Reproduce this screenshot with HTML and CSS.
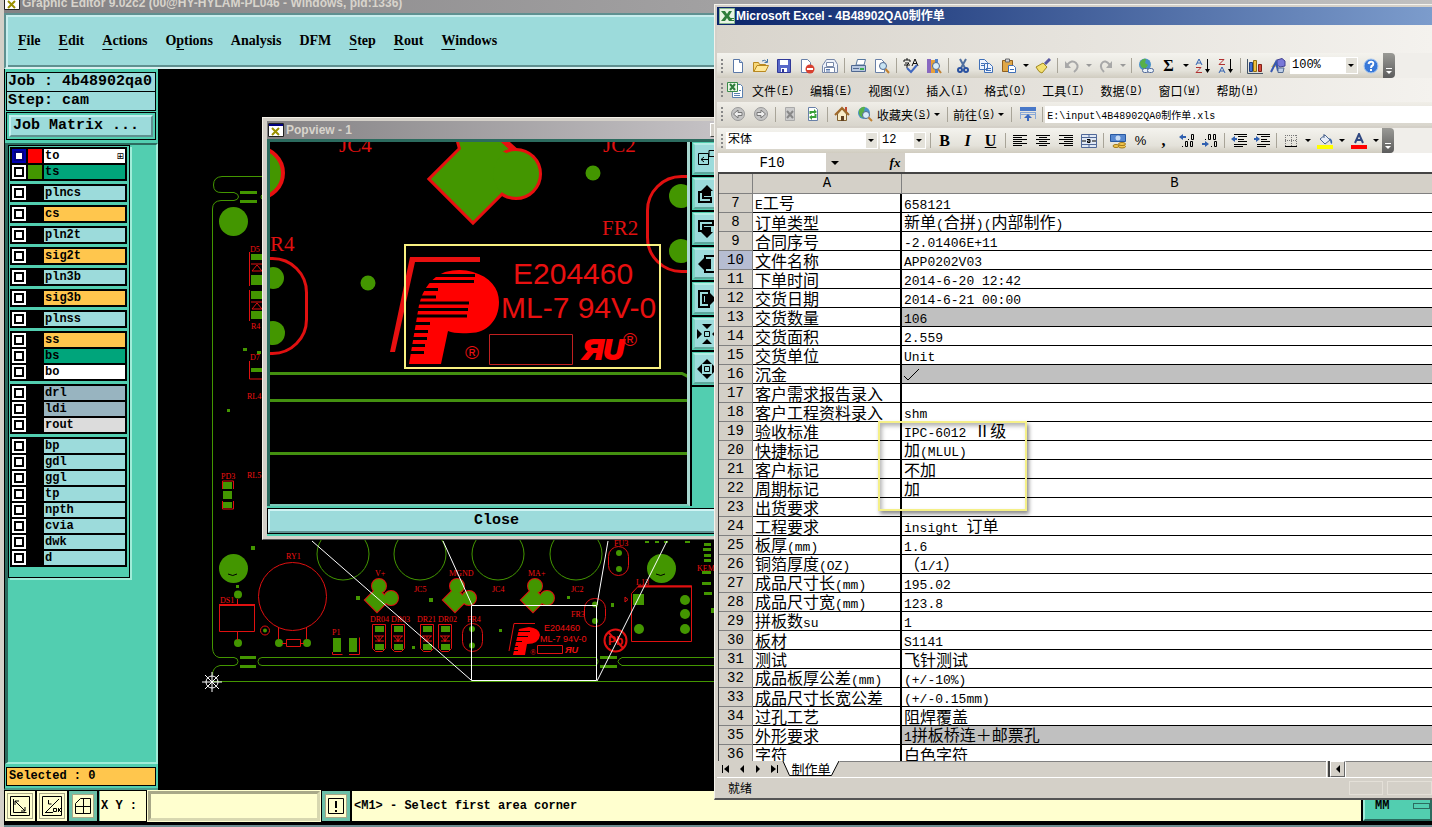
FILE: index.html
```html
<!DOCTYPE html>
<html lang="zh-CN">
<head>
<meta charset="utf-8">
<title>Graphic Editor</title>
<link rel="stylesheet" href="styles.css">
</head>
<body>
<div class="desktop">
<main class="editor">
  <header class="editor-title">
    <svg class="xicon" viewBox="0 0 16 14"><path fill="#fff" stroke="#222" d="M.5.5h15v13H.5z"/><path fill="#000080" d="M1 1h14v2H1z"/><path d="M4 5l7 7M11 5l-7 7" stroke="#9a9000" stroke-width="2"/></svg>
    <span>Graphic Editor 9.02c2 (00@HY-HYLAM-PL046 - Windows, pid:1336)</span>
  </header>
  <nav class="menubar">
    <button><u>F</u>ile</button><button><u>E</u>dit</button><button><u>A</u>ctions</button><button>O<u>p</u>tions</button><button>Analysis</button><button>DFM</button><button><u>S</u>tep</button><button><u>R</u>out</button><button><u>W</u>indows</button>
  </nav>
  <div class="work">
    <aside class="side">
      <div class="job">Job : 4b48902qa0</div>
      <div class="job step">Step: cam</div>
      <div class="matrix"><button>Job Matrix ...</button></div>
      <div class="panel">
        <div class="layers">
          <div class="group">
            <label class="layer on"><input type="checkbox"><i class="red"></i><span class="white">to<b>⊞</b></span></label>
            <label class="layer"><input type="checkbox"><i class="green"></i><span class="jade">ts</span></label>
          </div>
          <div class="group"><label class="layer"><input type="checkbox"><i></i><span>plncs</span></label></div>
          <div class="group"><label class="layer"><input type="checkbox"><i></i><span class="amber">cs</span></label></div>
          <div class="group"><label class="layer"><input type="checkbox"><i></i><span>pln2t</span></label></div>
          <div class="group"><label class="layer"><input type="checkbox"><i></i><span class="amber">sig2t</span></label></div>
          <div class="group"><label class="layer"><input type="checkbox"><i></i><span>pln3b</span></label></div>
          <div class="group"><label class="layer"><input type="checkbox"><i></i><span class="amber">sig3b</span></label></div>
          <div class="group"><label class="layer"><input type="checkbox"><i></i><span>plnss</span></label></div>
          <div class="group">
            <label class="layer"><input type="checkbox"><i></i><span class="amber">ss</span></label>
            <label class="layer"><input type="checkbox"><i></i><span class="jade">bs</span></label>
            <label class="layer"><input type="checkbox"><i></i><span class="white">bo</span></label>
          </div>
          <div class="group">
            <label class="layer"><input type="checkbox"><i></i><span class="slate">drl</span></label>
            <label class="layer"><input type="checkbox"><i></i><span class="slate">ldi</span></label>
            <label class="layer"><input type="checkbox"><i></i><span class="grey">rout</span></label>
          </div>
          <div class="group">
            <label class="layer"><input type="checkbox"><i></i><span>bp</span></label>
            <label class="layer"><input type="checkbox"><i></i><span>gdl</span></label>
            <label class="layer"><input type="checkbox"><i></i><span>ggl</span></label>
            <label class="layer"><input type="checkbox"><i></i><span>tp</span></label>
            <label class="layer"><input type="checkbox"><i></i><span>npth</span></label>
            <label class="layer"><input type="checkbox"><i></i><span>cvia</span></label>
            <label class="layer"><input type="checkbox"><i></i><span>dwk</span></label>
            <label class="layer"><input type="checkbox"><i></i><span>d</span></label>
          </div>
        </div>
      </div>
      <div class="selected">Selected : 0</div>
    </aside>
    <svg class="board">
      <defs>
        <g id="clover"><g stroke="#e01010" stroke-width="2"><path d="M0-12L12 0 0 12-12 0z"/><circle cx="2" cy="-14" r="7"/><circle cx="14" cy="-2" r="7"/></g><path d="M0-12L12 0 0 12-12 0z"/><circle cx="2" cy="-14" r="7"/><circle cx="14" cy="-2" r="7"/></g>
        <g id="diode"><path d="M.5.5h13v24l-3 3h-7l-3-3z" fill="none" stroke="#e01010"/><path fill="#439600" d="M3 2h9v6H3zM3 20h9v6H3z"/><path d="M2 12h10M7 12v6M3 12l4 5 4-5M3 17h9" fill="none" stroke="#e01010"/></g>
      </defs>
      <g transform="translate(-158 -69)">
        <g fill="none" stroke="#439600">
          <path d="M264 176.500H222Q213.500 177 213.500 185T222 192.500H234Q239 194 238.500 197T234 200.500H221Q212.500 201 212.500 209V648Q213 656 219 657.500H234Q238 658 238 661.500T234 665.500H220Q212.500 667 212.500 675"/>
          <path d="M264 193q-6 4 0 8M596 657.500H262q-4 0-4 4t4 4H596q4-4 0-8M714 657.500H622q-8 4 0 8H714M212 681.500H714"/>
          <circle cx="343" cy="554" r="26"/><circle cx="420" cy="554" r="26"/><circle cx="498" cy="554" r="26"/><circle cx="576" cy="554" r="26"/>
        </g>
        <g fill="#439600">
          <path d="M240 191h17v3h-17zM240 200h17v3h-17zM240 656h16v3h-16zM240 665h16v3h-16zM600 656h17v3h-17zM600 665h17v3h-17z"/>
          <circle cx="233.500" cy="221.500" r="14.500"/><circle cx="233.500" cy="568.500" r="14.500"/><circle cx="661.500" cy="568.500" r="14.500"/>
          <circle cx="238" cy="594.500" r="4"/><circle cx="238" cy="643" r="4"/><circle cx="279" cy="643" r="4"/><circle cx="307" cy="643" r="4"/><circle cx="265" cy="630.500" r="2"/>
          <circle cx="472" cy="629" r="3"/><circle cx="472" cy="645.500" r="3"/><circle cx="595" cy="604.500" r="3"/><circle cx="595" cy="621" r="3"/><circle cx="619" cy="553" r="3"/><circle cx="619" cy="569" r="3"/>
          <path d="M251 546h4v4h-4zM236 585h3v3h-3zM356 596h4v4h-4zM429 598h4v4h-4zM567 596h3v3h-3zM499 629h3v3h-3zM412 646h3v3h-3zM611 603h3v4h-3zM243 348h4v3h-4zM257 351h4v3h-4zM227 409h3v3h-3z"/>
          <path d="M333 638h8v14h-8zM349 638h8v14h-8zM223 482h9v7h-9zM223 491h9v8h-9zM223 502h9v6h-9z"/>
          <path d="M633 594h11v11h-11z"/><circle cx="685" cy="600" r="5"/><circle cx="685" cy="614" r="5"/><circle cx="685" cy="629" r="5"/><circle cx="639" cy="629" r="5"/>
          <path d="M704 543h7v3h-7zM703 548h8v3h-8zM704 554h7v3h-7zM704 559h7v3h-7zM702 571h9v3h-9zM702 582h9v3h-9zM704 592h8v3h-8zM711 608h3v5h-3zM645 541h4v2h-4zM655 541h4v2h-4zM664 541h4v2h-4zM685 541h5v2h-5z"/>
          <path d="M251 254h11v6h-11zM251 275h11v10h-11zM251 291h11v8h-11zM251 311h11v8h-11zM251 368h11v4h-11z"/>
          <use href="#clover" x="377" y="600"/><use href="#clover" x="455" y="600"/><use href="#clover" x="533" y="600"/>
        </g>
        <g fill="none" stroke="#e01010">
          <circle cx="292.500" cy="596.500" r="34"/><circle cx="265" cy="630.500" r="4.500"/>
          <path d="M219.500 605.500h35v26h-35zM237.500 599v6M237.500 632v8M278.500 627v12M306.500 627v12M286.500 639.500h14v7h-14zM282 643.500h4M301 643.500h3M332.500 652v2.500h10M349 654.500h10.500v-17"/>
          <path d="M219 605h36" stroke-width="2"/>
          <path d="M222.500 489v-8h11v8M222.500 501v8h11v-8M249.500 252v34M249.500 290v31M252 271l5-6 5 6zM252 309l5-6 5 6zM251 264h11M251 302h11M249.500 361v18h13"/>
          <rect x="462.500" y="623.500" width="20" height="28" rx="10"/><rect x="584.500" y="598.500" width="21" height="28" rx="10"/><rect x="608.500" y="546.500" width="20" height="29" rx="10"/>
          <path d="M691.500 586v55.500h-60v-48l7-7.500zM625 597v5l3-2.500z"/><path d="M638 586.500h54" stroke-width="2"/>
          <path d="M509 651l5-27.500h21M537.500 645.500h25v8h-25z"/>
          <circle cx="615.500" cy="640.500" r="11" stroke-width="2"/><path d="M608 632l15 16" stroke-width="2"/>
        </g>
        <use href="#diode" x="372" y="624"/><use href="#diode" x="391" y="624"/><use href="#diode" x="420" y="624"/><use href="#diode" x="438" y="624"/>
        <path fill="#f00" d="M519 629l10-2q10 1 11 8-1 9-13 9l-2 11h-12z"/><path stroke="#000" d="M515 631.500h15M514 636.500h14M514 641.500h8M512 646.500h6M512 650.500h6"/>
        <g class="silk">
          <text x="286" y="559">RY1</text><text x="220" y="603">DS1</text><text x="332" y="635">P1</text><text x="375" y="576">V+</text><text x="449" y="576">MGND</text><text x="528" y="576">MA+</text><text x="414" y="592">JC5</text><text x="492" y="592">JC4</text><text x="571" y="592">JC2</text><text x="370" y="622">DR04</text><text x="391" y="622">DR03</text><text x="417" y="622">DR21</text><text x="438" y="622">DR02</text><text x="467" y="622">FR4</text><text x="571" y="617">FR3</text><text x="614" y="546">FU3</text><text x="636" y="585">L13</text><text x="697" y="571">KEM</text><text x="250" y="252">D5</text><text x="251" y="329">R4</text><text x="247" y="399">RL4</text><text x="247" y="478">RL5</text><text x="221" y="479">PD3</text><text x="250" y="360">D7</text>
          <text x="530" y="655">®</text>
        </g>
        <text class="mini" x="544" y="631">E204460</text><text class="mini" x="540" y="642">ML-7 94V-0</text><text class="mini heavy" x="565" y="653">ЯU</text><text class="pb" x="608" y="645">Pb</text>
        <g fill="none" stroke="#fff"><path d="M312 541L471 680M443 541l29 64M608 541l-11 64M667 541L597 681M471.500 605.500h125v75h-125z"/><circle cx="212" cy="682" r="6"/><path d="M202 682h20M212 672v20M205 675l14 14M219 675l-14 14"/></g>
        <path d="M228 574q5 3 9 0M656 574q5 3 9 0" stroke="#000" fill="none"/>
      </g>
    </svg>
  </div>
  <footer class="prompt">
    <button class="pbtn" aria-label="Scale"><svg viewBox="0 0 20 20"><path d="M.5.500h19v19H.5zM3.500 3v13.500h13M5 5l10 10M5 9V5h4M15 11v4h-4" fill="none" stroke="#000"/></svg></button>
    <button class="pbtn" aria-label="Line mode"><svg viewBox="0 0 20 20"><path d="M.5.500h19v19H.5zM3 17L17 3M6.500 4v4h3M3 16.500h8M11.500 12.500v3h3v-3zM16.500 12v4M19 12l-2 2 2 2" fill="none" stroke="#000"/></svg></button>
    <button class="pbtn teal" aria-label="Grid"><svg viewBox="0 0 16 16"><path d="M.500 5.500l5-5h10v15H.5zM.5 8.500h15M8.500 .500v15" fill="none" stroke="#000"/></svg></button>
    <label class="xy" for="xy">X Y :</label>
    <input id="xy" class="xy-in" type="text">
    <button class="pbtn teal" aria-label="Alert"><svg viewBox="0 0 16 16"><path d="M.500.500h15v15H.5z" fill="none" stroke="#000"/><path d="M7 3h2v7H7zM7 12h2v2H7z"/></svg></button>
    <output class="msg">&lt;M1&gt; - Select first area corner</output>
    <button class="unit">MM<span></span></button>
  </footer>
</main>

<section class="pop">
  <header class="pop-title">
    <svg class="xicon" viewBox="0 0 16 14"><path fill="#fff" stroke="#222" d="M.5.5h15v13H.5z"/><path fill="#000080" d="M1 1h14v2H1z"/><path d="M4 5l7 7M11 5l-7 7" stroke="#9a9000" stroke-width="2"/></svg>
    <span>Popview - 1</span><button class="min" aria-label="Minimise"></button>
  </header>
  <div class="pop-body">
    <svg class="pop-view"><g transform="translate(-270 -142)">
      <g fill="#439600">
        <circle cx="258" cy="173" r="25" stroke="#e81010" stroke-width="4"/>
        <g stroke="#e81010" stroke-width="6"><path d="M456 130L461 149 431 179 473 221 530 164 492 130z"/><circle cx="516" cy="174" r="23"/></g>
        <path d="M456 130L461 149 431 179 473 221 530 164 500 150 496 130z"/><circle cx="516" cy="174" r="23"/>
        <circle cx="593" cy="173" r="7.500"/><circle cx="368" cy="283" r="7.500"/>
        <circle cx="273" cy="278" r="11"/><circle cx="273" cy="333" r="12"/><circle cx="681" cy="196" r="12"/><circle cx="681" cy="251" r="12"/>
      </g>
      <g fill="none" stroke="#e01010" stroke-width="3"><rect x="236" y="258.500" width="70.500" height="95" rx="34"/><rect x="647.500" y="176.500" width="72" height="95" rx="34"/></g>
      <path fill="none" stroke="#439010" stroke-width="3" d="M269 373.500H682l6 3M269 400.500H690M269 453.500H690"/>
      <g class="ref"><text x="339" y="152">JC4</text><text x="603" y="152">JC2</text><text x="270" y="251">R4</text><text x="602" y="235">FR2</text></g>
      <path fill="#e81010" d="M410 257h70v5h-65l-20 90h-5z"/>
      <path fill="#f00" d="M445 272Q460 268 473 272C490 277 499 288 499 302C499 320 487 333 470 333Q455 334 448 331L441 364H409L419 305Q425 280 445 272z"/>
      <path fill="none" stroke="#000" stroke-width="3" d="M434 275.500h41M428 281.500h46M421 289.500h17M419 297h17M416 303h53M415 309.500h53M414 316h53M413 323.500h17M411 331.500h17M409 338.500h18M407 345.500h18M407 352.500h17"/>
      <path fill="none" stroke="#c02020" d="M489.500 334.500h83v30h-83z"/>
      <g class="mark"><text x="513" y="284">E204460</text><text x="501" y="318">ML-7 94V-0</text></g>
      <text class="ur" x="583" y="359">ЯU</text><text class="reg" x="465" y="359">®</text><text class="reg" x="623" y="346">®</text>
      <path fill="none" stroke="#f8f080" stroke-width="2" d="M405 245h255v123H405z"/>
    </g></svg>
    <div class="pop-tools">
      <button aria-label="Overview"><svg viewBox="0 0 20 20"><path d="M1.500 4.500h10v11h-10zM12 1.500h7v6h-7zM4 10.500h8M7 8l-3 2.500L7 13" fill="none" stroke="#000"/></svg></button>
      <button aria-label="Up"><svg viewBox="0 0 20 20"><path d="M2 8v10h12v-4H6V8z" fill="none" stroke="#000" stroke-width="2"/><path d="M10 1l6 6h-2v5H6V7H4z"/></svg></button>
      <button aria-label="Down"><svg viewBox="0 0 20 20"><path d="M2 2h14v4H6v6H2z" fill="none" stroke="#000" stroke-width="2"/><path d="M10 19l6-6h-2V8H6v5H4z"/></svg></button>
      <button aria-label="Left"><svg viewBox="0 0 20 20"><path d="M8 2h10v16H8v-4h5V6H8z" fill="none" stroke="#000" stroke-width="2"/><path d="M1 10l6-6v3h5v6H7v3z"/></svg></button>
      <button aria-label="Right"><svg viewBox="0 0 20 20"><path d="M2 2h10v4H6v8h6v4H2z" fill="none" stroke="#000" stroke-width="2"/><path d="M19 10l-6-6v3H8v6h5v3z"/></svg></button>
      <button aria-label="Zoom in"><svg viewBox="0 0 20 20"><path d="M7.500 7.500h5v5h-5z" fill="none" stroke="#000"/><path d="M5 0h10l-5 5zM5 20h10l-5-5zM0 5v10l5-5zM20 5v10l-5-5z"/></svg></button>
      <button aria-label="Zoom out"><svg viewBox="0 0 20 20"><path d="M7.500 7.500h5v5h-5z" fill="none" stroke="#000"/><path d="M5 5h10l-5-5zM5 15h10l-5 5zM5 5v10l-5-5zM15 5v10l5-5z"/></svg></button>
    </div>
  </div>
  <div class="pop-foot"><button>Close</button></div>
</section>

<section class="excel">
  <header class="xl-title">
    <svg viewBox="0 0 16 16"><path fill="#e8f4e4" stroke="#8ab890" d="M.5.5h15v15H.5z"/><path fill="#2f7d3c" d="M2 3h4l2 3 2-3h3L10 8l4 5h-4l-2-3-2 3H2l4-5z"/><path stroke="#2f7d3c" d="M10 10.500h5M11 12.500h4"/></svg>
    <span>Microsoft Excel - 4B48902QA0制作单</span>
  </header>
  <div class="xl-gap"></div>
  <div class="bar">
    <span class="grip"></span>
    <button aria-label="新建"><svg viewBox="0 0 16 16"><path fill="#fff" stroke="#5a78a8" d="M3.500 1.500h6l3 3v10h-9z"/><path fill="#c8d8f0" stroke="#5a78a8" d="M9.500 1.500v3h3"/></svg></button>
    <button aria-label="打开"><svg viewBox="0 0 16 16"><path fill="#f8d878" stroke="#b88820" d="M.5 13.500v-9h5l1 2h6v7z"/><path fill="#ffe898" stroke="#b88820" d="M1 13.500l3-6h11.500l-3 6z"/><path fill="none" stroke="#4878a8" d="M9 3q3-2 5 1M14.500 1v3.500h-3"/></svg></button>
    <button aria-label="保存"><svg viewBox="0 0 16 16"><path fill="#5868c8" stroke="#303898" d="M1.500 1.500h13v13h-13z"/><path fill="#fff" d="M4 2h8v5H4zM5 10h6v4H5z"/><path fill="#303898" d="M6 11h2v3H6z"/></svg></button>
    <button aria-label="权限"><svg viewBox="0 0 16 16"><path fill="#fff" stroke="#6880a8" d="M2.500 1.500h6l3 3v10h-9z"/><circle cx="11" cy="11" r="4.500" fill="#d84030"/><path fill="#fff" d="M8 10h6v2H8z"/></svg></button>
    <button aria-label="邮件"><svg viewBox="0 0 16 16"><path fill="#eef2fa" stroke="#7888a8" d="M.500 7.500l4-6h8l3 5v8H.5z"/><path fill="#fff" stroke="#7888a8" d="M4.500 4.500h7v4h-7zM2.500 9.500h10v5h-10z"/><path stroke="#5878b0" d="M4 11.500h4M4 13h4"/></svg></button>
    <span class="sep"></span>
    <button aria-label="打印"><svg viewBox="0 0 16 16"><path fill="#fff" stroke="#5878a0" d="M5 7l1.500-5.500h8L13 7z"/><path fill="#b8c8e0" stroke="#506890" d="M.5 7.500h14v6H.5z"/><path fill="#38b050" d="M9 10h4v2H9z"/><path stroke="#506890" d="M2 10.500h6"/></svg></button>
    <button aria-label="打印预览"><svg viewBox="0 0 16 16"><path fill="#fff" stroke="#6880a8" d="M1.500 1.500h6l3 3v10h-9z"/><circle cx="9" cy="8" r="3.500" fill="#c8e4f4" stroke="#506890"/><path stroke="#c08030" stroke-width="2" d="M11.500 11l3.500 4"/></svg></button>
    <span class="sep"></span>
    <button aria-label="拼写"><svg viewBox="0 0 16 16"><path d="M1 4V2h6v2M4 0v2M2 5h4L4 7v3M1 7h6M9 8l3-7 3 7M10 5.500h4" fill="none" stroke="#111"/><path d="M4 10l4 4 6-7" fill="none" stroke="#4068c0" stroke-width="2"/></svg></button>
    <button aria-label="信息检索"><svg viewBox="0 0 16 16"><path fill="#8868c0" d="M1 1h4v14H1z"/><path fill="#e8a038" d="M5 2h4v13H5z"/><path fill="#5080c8" d="M9 1h3v14H9z"/><circle cx="10" cy="8" r="3.500" fill="#d8ecf8" stroke="#506890"/><path stroke="#c08030" stroke-width="2" d="M12 11l3 4"/></svg></button>
    <span class="sep"></span>
    <button aria-label="剪切"><svg viewBox="0 0 16 16"><path d="M5 1l5 9M11 1L6 10" stroke="#5070a0" stroke-width="2"/><g fill="none" stroke="#2850a0" stroke-width="2"><circle cx="5" cy="12" r="2"/><circle cx="11" cy="12" r="2"/></g></svg></button>
    <button aria-label="复制"><svg viewBox="0 0 16 16"><path fill="#eef4ff" stroke="#4070b8" d="M1.500 1.500h5l3 3v7h-8zM6.500 5.500h5l3 3v6h-8z"/><path stroke="#4070b8" d="M3 5.500h3M3 7.500h3M8 10.500h5M8 12.500h5"/></svg></button>
    <button aria-label="粘贴"><svg viewBox="0 0 16 16"><path fill="#e0a848" stroke="#906020" d="M1.500 2.500h10v11h-10z"/><path fill="#d0d4dc" stroke="#666" d="M4.500 1h4v3h-4z"/><path fill="#fff" stroke="#4070b8" d="M7.500 7.500h5l2 2v5h-7z"/><path stroke="#4070b8" d="M9 11.500h4"/></svg></button>
    <span class="caret"></span>
    <button aria-label="格式刷"><svg viewBox="0 0 16 16"><path stroke="#5858a0" stroke-width="3" d="M10 6l5-5"/><path fill="#f4e070" stroke="#a08820" d="M1 9l7-4 4 4-5 6q-3 0-6-6z"/></svg></button>
    <span class="sep"></span>
    <button aria-label="撤消"><svg viewBox="0 0 16 16"><path fill="none" stroke="#a8a8a8" stroke-width="2" d="M3 7q5-6 9-2t-2 9"/><path fill="#a8a8a8" d="M1 3v7h6z"/></svg></button>
    <span class="caret dim"></span>
    <button aria-label="恢复"><svg viewBox="0 0 16 16"><path fill="none" stroke="#a8a8a8" stroke-width="2" d="M12 7Q7 1 4 5t2 9"/><path fill="#a8a8a8" d="M14 3v7H8z"/></svg></button>
    <span class="caret dim"></span>
    <span class="sep"></span>
    <button aria-label="超链接"><svg viewBox="0 0 16 16"><circle cx="7" cy="6.500" r="6" fill="#4890c8"/><path fill="#58b048" d="M2 4q3-4 6-3L7 5l3 2-3 4q-5-1-5-7z"/><g fill="#e8f0f8" stroke="#506898"><rect x="4.500" y="10.500" width="6" height="4" rx="2"/><rect x="9.500" y="10.500" width="6" height="4" rx="2"/></g></svg></button>
    <button class="sigma" aria-label="自动求和">Σ</button>
    <span class="caret"></span>
    <button aria-label="升序"><svg viewBox="0 0 16 16"><path fill="none" stroke="#3060b0" d="M1 7l3-6 3 6M2 5h4"/><path fill="none" stroke="#b03030" d="M1 9.500h5L1 14.500h6"/><path stroke="#000" d="M12.500 1v13"/><path d="M10 11h5l-2.500 4z"/></svg></button>
    <button aria-label="降序"><svg viewBox="0 0 16 16"><path fill="none" stroke="#b03030" d="M1 1.500h5L1 6.500h6"/><path fill="none" stroke="#3060b0" d="M1 15l3-6 3 6M2 13h4"/><path stroke="#000" d="M12.500 1v13"/><path d="M10 11h5l-2.500 4z"/></svg></button>
    <span class="sep"></span>
    <button aria-label="图表"><svg viewBox="0 0 16 16"><path fill="none" stroke="#456" d="M.5 1v14.500H16"/><path fill="#4070d0" stroke="#204080" d="M2.500 4.500h3v9h-3z"/><path fill="#f0c040" stroke="#907010" d="M6.500 2.500h3v11h-3z"/><path fill="#d84838" stroke="#802018" d="M11.500 6.500h3v7h-3z"/></svg></button>
    <button aria-label="绘图"><svg viewBox="0 0 16 16"><path fill="#7878d8" stroke="#404090" d="M7 2l5-1.500L15 3v5l-5 1-3-2z"/><path fill="#d8c068" d="M1 9l4-5 3 5z"/><path fill="none" stroke="#3858b0" stroke-width="2" d="M1 14l5-10 2 9"/><path fill="#c0d0e8" stroke="#506890" d="M8 10h6l-1 4.500H8z"/></svg></button>
    <span class="pick zoom"><select aria-label="显示比例"><option>100%</option></select></span>
    <button aria-label="帮助"><svg viewBox="0 0 16 16"><circle cx="8" cy="8" r="7" fill="#3878d8" stroke="#a8c8f0"/><path fill="none" stroke="#fff" stroke-width="2" d="M5.500 6q.5-2.500 3-2.300T10 7Q8 8 8 10M8 11v2"/></svg></button>
    <span class="cap"></span>
  </div>
  <nav class="xl-menu">
    <span class="grip"></span>
    <svg viewBox="0 0 16 16"><path fill="#fff" stroke="#5a80b0" d="M5.500 2.500h8l2 2v11h-10z"/><path fill="#e8f4e4" stroke="#3a8a48" d="M.5.500h10v9H.5z"/><path stroke="#2f7d3c" stroke-width="2" d="M3 2l5 6M8 2L3 8"/><path stroke="#5a80b0" d="M7 11.500h6M7 13.500h6M12 8.500h2"/></svg>
    <button>文件<span class="s">(<u>F</u>)</span></button><button>编辑<span class="s">(<u>E</u>)</span></button><button>视图<span class="s">(<u>V</u>)</span></button><button>插入<span class="s">(<u>I</u>)</span></button><button>格式<span class="s">(<u>O</u>)</span></button><button>工具<span class="s">(<u>T</u>)</span></button><button>数据<span class="s">(<u>D</u>)</span></button><button>窗口<span class="s">(<u>W</u>)</span></button><button>帮助<span class="s">(<u>H</u>)</span></button>
  </nav>
  <div class="bar web">
    <span class="grip"></span>
    <button aria-label="后退"><svg viewBox="0 0 16 16"><circle cx="8" cy="8" r="6.500" fill="#c4c4c4" stroke="#999"/><path fill="#eee" stroke="#777" d="M3.500 8L8 4v2.500h4v3H8V12z"/></svg></button>
    <button aria-label="前进"><svg viewBox="0 0 16 16"><circle cx="8" cy="8" r="6.500" fill="#c4c4c4" stroke="#999"/><path fill="#eee" stroke="#777" d="M12.500 8L8 4v2.500H4v3h4V12z"/></svg></button>
    <span class="sep"></span>
    <button aria-label="停止"><svg viewBox="0 0 16 16"><path fill="#ccc" stroke="#aaa" d="M3.500 1.500h9v13h-9z"/><path stroke="#888" stroke-width="2" d="M5 5l6 7M11 5l-6 7"/></svg></button>
    <button aria-label="刷新"><svg viewBox="0 0 16 16"><path fill="#fff" stroke="#6880a8" d="M3.500 1.500h7l2 2v11h-9z"/><path fill="none" stroke="#38a038" stroke-width="2" d="M5.500 8V6h4M10.500 8v3h-4"/><path fill="#38a038" d="M9 3l3 3-3 2zM7 9l-3 2 3 3z"/></svg></button>
    <span class="sep"></span>
    <button aria-label="主页"><svg viewBox="0 0 16 16"><path fill="#c04830" d="M11 1h2v5h-2z"/><path fill="#f8ecc8" stroke="#806030" d="M3.500 8v6.500h9V8L8 3z"/><path fill="none" stroke="#a06828" stroke-width="2" d="M1 9l7-7 7 7"/><path fill="#604020" d="M7 10h3v5H7z"/></svg></button>
    <button aria-label="搜索网页"><svg viewBox="0 0 16 16"><circle cx="7" cy="7" r="6" fill="#4890c8"/><path fill="#58b048" d="M2 4q3-4 6-3L7 5l2 2-3 5Q1 10 2 4z"/><circle cx="9" cy="9" r="3.500" fill="#d8ecf8" stroke="#506890"/><path stroke="#c08030" stroke-width="2" d="M11.500 11.500L15 15"/></svg></button>
    <button class="word">收藏夹<span class="s">(<u>S</u>)</span></button><span class="caret"></span>
    <span class="sep"></span>
    <button class="word">前往<span class="s">(<u>G</u>)</span></button><span class="caret"></span>
    <span class="sep"></span>
    <button aria-label="只显示 Web 工具栏"><svg viewBox="0 0 16 16"><path fill="#4878c8" d="M0 1h16v4H0z"/><path fill="none" stroke="#88a8d8" d="M0 6.500h16M.5 6v7M15.500 6v7M0 8.500h16"/><path fill="#3868c0" d="M8 8l4 4H9v3H7v-3H4z"/></svg></button>
    <span class="sep"></span>
    <input class="addr" type="text" aria-label="地址" value="E:\input\4B48902QA0制作单.xls">
  </div>
  <div class="bar">
    <span class="grip"></span>
    <span class="pick font"><select aria-label="字体"><option>宋体</option></select></span>
    <span class="pick size"><select aria-label="字号"><option>12</option></select></span>
    <span class="sep"></span>
    <button class="fmt">B</button><button class="fmt it">I</button><button class="fmt"><u>U</u></button>
    <span class="sep"></span>
    <button aria-label="左对齐"><svg viewBox="0 0 16 16"><path stroke="#000" d="M1 2.500h14M1 4.500h9M1 6.500h14M1 8.500h9M1 10.500h14M1 12.500h9"/></svg></button>
    <button aria-label="居中"><svg viewBox="0 0 16 16"><path stroke="#000" d="M1 2.500h14M4 4.500h8M1 6.500h14M4 8.500h8M1 10.500h14M4 12.500h8"/></svg></button>
    <button aria-label="右对齐"><svg viewBox="0 0 16 16"><path stroke="#000" d="M1 2.500h14M6 4.500h9M1 6.500h14M6 8.500h9M1 10.500h14M6 12.500h9"/></svg></button>
    <button aria-label="合并及居中"><svg viewBox="0 0 16 16"><path fill="#e0e8f4" stroke="#506898" d="M.5 1.500h15v13H.5zM.5 4.500h15M.5 11.500h15M8 2v2M8 12v2"/><path fill="none" stroke="#000" d="M1 8h4M11 8h4M6 6.500h3v3H6.500V8H9"/></svg></button>
    <span class="sep"></span>
    <button aria-label="货币样式"><svg viewBox="0 0 16 16"><path fill="#5888d0" stroke="#2858a0" d="M.5 1.500h15v7H.5z"/><circle cx="8" cy="5" r="2.500" fill="#c8dcf4"/><g fill="#f4c850" stroke="#a07818"><ellipse cx="12" cy="13.500" rx="3.500" ry="1.500"/><ellipse cx="12" cy="11" rx="3.500" ry="1.500"/><ellipse cx="6" cy="13" rx="3" ry="1.500"/></g></svg></button>
    <button class="pct">%</button><button class="fmt">,</button>
    <button class="dec" aria-label="增加小数位数"><svg viewBox="0 0 16 16"><path fill="#3060b0" d="M0 4l4-3v2h3v2H4v2z"/><path d="M9 6h1v1H9zM3 13h1v1H3z"/><path fill="none" stroke="#000" d="M12.500 1.500h2v5h-2zM6.500 8.500h2v5h-2zM11.500 8.500h2v5h-2z"/></svg></button>
    <button class="dec" aria-label="减少小数位数"><svg viewBox="0 0 16 16"><path fill="#3060b0" d="M7 11l-4-3v2H0v2h3v2z"/><path d="M3 6h1v1H3zM9 13h1v1H9z"/><path fill="none" stroke="#000" d="M6.500 1.500h2v5h-2zM11.500 1.500h2v5h-2zM12.500 8.500h2v5h-2z"/></svg></button>
    <span class="sep"></span>
    <button aria-label="减少缩进"><svg viewBox="0 0 16 16"><path stroke="#000" d="M3 1.500h13M7 3.500h9M7 6.500h6M7 8.500h9M3 11.500h13M3 13.500h9"/><path fill="#3060b0" d="M0 6l4-3v2h2v2H4v2z"/></svg></button>
    <button aria-label="增加缩进"><svg viewBox="0 0 16 16"><path stroke="#000" d="M3 1.500h13M7 3.500h9M7 6.500h6M7 8.500h9M3 11.500h13M3 13.500h9"/><path fill="#3060b0" d="M6 6L2 3v2H0v2h2v2z"/></svg></button>
    <span class="sep"></span>
    <button aria-label="边框"><svg viewBox="0 0 16 16"><path fill="none" stroke="#777" stroke-dasharray="1 1" d="M2 2.500h12M2 7.500h12M2.500 2v11M8.500 2v11M13.500 2v11"/><path stroke="#000" d="M2 13.500h12"/></svg></button><span class="caret"></span>
    <button aria-label="填充颜色"><svg viewBox="0 0 16 16"><path fill="#e8eef8" stroke="#506890" d="M3 6l5-4 5 5-5 4z"/><path fill="none" stroke="#506890" d="M7 5V1"/><path fill="#3868b0" d="M12 5q4 1 3 6-2-1-2-4z"/><path fill="#ff0" d="M0 12h16v4H0z"/></svg></button><span class="caret"></span>
    <button aria-label="字体颜色"><svg viewBox="0 0 16 16"><path fill="none" stroke="#304880" stroke-width="2" d="M4 10l4-9 4 9M5 7h6"/><path fill="#f00" d="M0 12h16v4H0z"/></svg></button><span class="caret"></span>
    <span class="cap"></span>
  </div>
  <div class="formula">
    <input class="name" type="text" aria-label="名称框" value="F10"><button class="name-btn" aria-label="名称列表"></button><button class="fx" aria-label="插入函数"><i>fx</i></button><input class="fval" type="text" aria-label="编辑栏">
  </div>
  <div class="sheet">
    <table>
      <colgroup><col class="c0"><col class="c1"><col></colgroup>
      <thead><tr><th></th><th>A</th><th>B</th></tr></thead>
      <tbody>
        <tr><th>7</th><td><span class="n">E</span>工号</td><td><span class="n">658121</span></td></tr>
        <tr><th>8</th><td>订单类型</td><td>新单<span class="n">(</span>合拼<span class="n">)(</span>内部制作<span class="n">)</span></td></tr>
        <tr><th>9</th><td>合同序号</td><td><span class="n">-2.01406E+11</span></td></tr>
        <tr><th class="cur">10</th><td>文件名称</td><td><span class="n">APP0202V03</span></td></tr>
        <tr><th>11</th><td>下单时间</td><td><span class="n">2014-6-20 12:42</span></td></tr>
        <tr><th>12</th><td>交货日期</td><td><span class="n">2014-6-21 00:00</span></td></tr>
        <tr class="sh"><th>13</th><td>交货数量</td><td><span class="n">106</span></td></tr>
        <tr><th>14</th><td>交货面积</td><td><span class="n">2.559</span></td></tr>
        <tr><th>15</th><td>交货单位</td><td><span class="n">Unit</span></td></tr>
        <tr class="sh"><th>16</th><td>沉金</td><td><svg class="tick" viewBox="0 0 16 14"><path d="M0 9l4 4L15 2" fill="none" stroke="#000"/></svg></td></tr>
        <tr><th>17</th><td>客户需求报告录入</td><td></td></tr>
        <tr><th>18</th><td>客户工程资料录入</td><td><span class="n">shm</span></td></tr>
        <tr><th>19</th><td>验收标准</td><td><span class="n">IPC-6012 </span>Ⅱ级</td></tr>
        <tr><th>20</th><td>快捷标记</td><td>加<span class="n">(MLUL)</span></td></tr>
        <tr><th>21</th><td>客户标记</td><td>不加</td></tr>
        <tr><th>22</th><td>周期标记</td><td>加</td></tr>
        <tr><th>23</th><td>出货要求</td><td></td></tr>
        <tr><th>24</th><td>工程要求</td><td><span class="n">insight </span>订单</td></tr>
        <tr><th>25</th><td>板厚<span class="n">(mm)</span></td><td><span class="n">1.6</span></td></tr>
        <tr><th>26</th><td>铜箔厚度<span class="n">(OZ)</span></td><td>（<span class="n">1/1</span>）</td></tr>
        <tr><th>27</th><td>成品尺寸长<span class="n">(mm)</span></td><td><span class="n">195.02</span></td></tr>
        <tr><th>28</th><td>成品尺寸宽<span class="n">(mm)</span></td><td><span class="n">123.8</span></td></tr>
        <tr><th>29</th><td>拼板数<span class="n">su</span></td><td><span class="n">1</span></td></tr>
        <tr><th>30</th><td>板材</td><td><span class="n">S1141</span></td></tr>
        <tr><th>31</th><td>测试</td><td>飞针测试</td></tr>
        <tr><th>32</th><td>成品板厚公差<span class="n">(mm)</span></td><td><span class="n">(+/-10%)</span></td></tr>
        <tr><th>33</th><td>成品尺寸长宽公差</td><td><span class="n">(+/-0.15mm)</span></td></tr>
        <tr><th>34</th><td>过孔工艺</td><td>阻焊覆盖</td></tr>
        <tr class="sh"><th>35</th><td>外形要求</td><td><span class="n">1</span>拼板桥连＋邮票孔</td></tr>
        <tr><th>36</th><td>字符</td><td>白色字符</td></tr>
      </tbody>
    </table>
  </div>
  <div class="tabs">
    <button aria-label="首张"><svg viewBox="0 0 8 8"><path d="M0 0h1v8H0zM7 0v8L2 4z"/></svg></button><button aria-label="上一张"><svg viewBox="0 0 8 8"><path d="M6 0v8L2 4z"/></svg></button><button aria-label="下一张"><svg viewBox="0 0 8 8"><path d="M2 0v8l4-4z"/></svg></button><button aria-label="末张"><svg viewBox="0 0 8 8"><path d="M7 0h1v8H7zM1 0v8l5-4z"/></svg></button>
    <button class="tab"><svg viewBox="0 0 58 16"><path fill="#fff" stroke="#000" d="M.5-1l7 15.500h42L57.500-1"/></svg><span>制作单</span></button>
    <span class="fill"></span>
    <span class="split"></span><button class="scroll" aria-label="向左滚动"><svg viewBox="0 0 8 8"><path d="M6 0v8L2 4z"/></svg></button><span class="track"></span>
  </div>
  <footer class="ready"><span>就绪</span><i></i><i></i></footer>
  <div class="note"></div>
</section>
</div>
</body>
</html>
```
FILE: styles.css
```css
* { box-sizing: border-box; }
body { margin: 0; }
button, input, select { font: inherit; color: inherit; margin: 0; padding: 0; border: 0; border-radius: 0; background: none; }
svg { display: block; }
i { font-style: normal; }
.desktop { position: relative; height: 100vh; overflow: hidden; background: #000; color: #000; font-family: "Liberation Mono", "Noto Sans CJK SC", monospace; }

/* editor window */
.editor { height: 100%; display: flex; flex-direction: column; border-left: 4px solid #d4d0c8; }
.editor-title { height: 20px; margin-top: -7px; flex: none; display: flex; align-items: center; gap: 2px; background: linear-gradient(90deg, #848284, #c0c0c0); color: #d8d4cc; font: bold 12px "Liberation Sans", sans-serif; white-space: nowrap; }
.xicon { width: 16px; height: 14px; flex: none; }
.menubar { height: 56px; flex: none; display: flex; align-items: center; gap: 18px; padding: 0 12px; background: #9cdbdb; border: 2px solid #5f9090; border-right: 0; border-bottom-color: #d8f0f0; box-shadow: inset 2px 2px #c8eeee, inset 0 -2px #5f9090; font: bold 14px "Liberation Serif", serif; }
.menubar u { text-underline-offset: 4px; }
.work { flex: 1; min-height: 0; display: flex; }
.side { width: 154px; flex: none; display: flex; flex-direction: column; padding-top: 3px; background: #52ceb0; border-left: 1px solid #000; border-bottom: 2px solid #4a9c8c; }
.job { height: 20px; margin: 0 2px 0 1px; padding-left: 1px; border: 1px solid #000; background: #9cdbdb; font: bold 15px/18px "Liberation Mono", monospace; white-space: nowrap; }
.job + .job { height: 19px; border-top: 0; }
.matrix { margin: 1px 2px 0 1px; height: 28px; padding: 2px; border: 1px solid #000; display: flex; }
.matrix button { flex: 1; text-align: left; padding-left: 2px; border: 2px solid; border-color: #c4f0f0 #5f9090 #5f9090 #c4f0f0; background: #9cdbdb; font: bold 15px/18px "Liberation Mono", monospace; }
.panel { flex: 1; margin-top: 3px; border: solid #2c6b5f; border-width: 2px 2px 2px 3px; border-right-color: #a0ecd8; border-bottom-color: #a0ecd8; }
.layers { width: 122px; padding: 1px 2px 10px 1px; border: 1px solid #000; box-shadow: 2px 2px #a0ecd8; display: flex; flex-direction: column; gap: 3px; }
.group { display: flex; flex-direction: column; gap: 2px; padding: 2px; background: #000; }
.layer { display: flex; gap: 2px; height: 14px; font: bold 12px/14px "Liberation Mono", monospace; }
.layer input { appearance: none; width: 14px; height: 14px; border: 2px solid #fff; background: #fff; box-shadow: inset 0 0 0 2px #000; flex: none; }
.layer.on input { border-color: #0000b0; box-shadow: inset 0 0 0 2px #000080; }
.layer i { width: 14px; flex: none; background: #000; }
.layer span { flex: 1; display: flex; justify-content: space-between; padding: 0 1px; background: #9cdbdb; }
.layer b { font: 9px/14px "DejaVu Sans", sans-serif; }
.layer .red { background: #f00; }
.layer .green { background: #439600; }
.layer .white { background: #fff; }
.layer .jade { background: #00a57b; }
.layer .amber { background: #ffc64d; }
.layer .slate { background: #98b4c0; }
.layer .grey { background: #dcdcdc; }
.selected { height: 19px; margin: 3px 2px 2px 1px; padding-left: 2px; border: 1px solid #000; background: #ffc64d; font: bold 12px/17px "Liberation Mono", monospace; }
.board { flex: 1; min-width: 0; height: 100%; background: #000; }
.silk text { font: 8px "Liberation Serif", serif; fill: #f01010; }
.mini { font: 9px "Liberation Sans", sans-serif; fill: #f01010; }
.heavy { font-weight: bold; font-style: italic; }
.pb { font: bold 12px "Liberation Sans", sans-serif; fill: #e01010; }
.prompt { height: 37px; flex: none; display: flex; gap: 2px; align-items: stretch; padding: 1px 0 4px 1px; background: #000; border-bottom: 2px solid #6c8c90; font: bold 12px "Liberation Mono", monospace; }
.pbtn { width: 30px; flex: none; display: grid; place-items: center; background: #ffffcf; border: 2px solid #ffffcf; box-shadow: inset 0 0 0 1px #a8a888; }
.pbtn svg { width: 20px; height: 20px; }
.pbtn.teal { border: 3px solid #6cc0a8; width: 28px; }
.pbtn.teal svg { width: 16px; height: 16px; }
.xy { width: 47px; display: flex; align-items: center; padding-left: 1px; background: #ffffcf; border-left: 1px solid #6cc0a8; }
.xy-in { width: 172px; padding: 0 8px; border: 3px solid; border-color: #a8a888 #d8d8b0 #d8d8b0 #a8a888; outline: 1px solid #ffffcf; background: #ffffcf; }
.msg { flex: 1; display: flex; align-items: center; padding-left: 2px; background: #ffffcf; }
.unit { width: 69px; display: flex; align-items: center; gap: 24px; padding-left: 10px; background: #52ceb0; border: 2px solid #2c6b5f; border-left-color: #a0ecd8; }
.unit span { width: 20px; height: 6px; border: 1px solid #2c6b5f; }

/* popview window */
.pop { position: absolute; left: 262px; top: 117px; width: 469px; height: 423px; display: flex; flex-direction: column; padding: 3px 4px; background: #d4d0c8; border: 1px solid #f4f0e8; border-right-color: #555; border-bottom-color: #555; }
.pop-title { height: 18px; flex: none; display: flex; align-items: center; gap: 2px; padding-left: 1px; background: linear-gradient(90deg, #848284, #c6c3c6); color: #d8d4cc; font: bold 12px "Liberation Sans", sans-serif; }
.min { margin: 0 0 0 auto; width: 16px; height: 14px; border: 1px solid; border-color: #fff #444 #444 #fff; background: #d4d0c8; }
.pop-body { flex: 1; min-height: 0; display: flex; background: #000; border: solid #2c6b5f; border-width: 3px 0 0 3px; }
.pop-view { flex: 1; min-width: 0; height: 100%; background: #000; border-bottom: 2px solid #7cc8b8; border-right: 3px solid #a8d8d0; }
.pop-tools { width: 34px; flex: none; margin-left: 2px; display: flex; flex-direction: column; gap: 2px; background: linear-gradient(#000 245px, #52ceb0 245px); }
.pop-tools button { height: 33px; padding: 2px; border: 3px solid; border-color: #b4ece4 #5fa89c #5fa89c #7cd4c4; background: #9cdbdb; outline: 1px solid #52ceb0; outline-offset: -1px; }
.pop-tools svg { width: 20px; height: 20px; }
.pop-foot { flex: none; height: 30px; padding: 3px 1px; background: #52ceb0; display: flex; }
.pop-foot button { flex: 1; border: 2px solid; border-color: #d0f4f4 #5f9090 #5f9090 #d0f4f4; background: #9cdbdb; outline: 1px solid #000; font: bold 15px/18px "Liberation Mono", monospace; }
.ref text { font: 21px "Liberation Serif", serif; fill: #e01010; }
.mark text { font: 30px "Liberation Sans", sans-serif; fill: #e81010; }
.ur { font: italic bold 28px "Liberation Sans", sans-serif; fill: #f00; stroke: #f00; stroke-width: 2; }
.reg { font: 19px "Liberation Sans", sans-serif; fill: #e81010; }

/* spreadsheet window */
.excel { position: absolute; left: 714px; right: 0; top: 4px; height: 796px; display: flex; flex-direction: column; padding: 2px 0 0 2px; overflow: hidden; background: #d4d0c8; border: solid #f4f2ec; border-width: 1px 0 2px 1px; border-bottom-color: #555; font-family: "Liberation Mono", "Noto Sans CJK SC", sans-serif; font-size: 12px; }
.excel > * { flex: none; }
.xl-title { height: 18px; display: flex; align-items: center; gap: 1px; padding-left: 2px; background: linear-gradient(90deg, #0a246a, #7c9ccc); color: #fff; font: bold 12px/18px "Liberation Sans", "Noto Sans CJK SC", sans-serif; }
.xl-title svg { width: 16px; height: 16px; }
.xl-gap { height: 28px; background: linear-gradient(90deg, #d8d4cc, #f4f2ee); }
.bar { display: flex; align-items: center; height: 25px; padding-left: 4px; background: linear-gradient(#f4f3ee, #e4e2da 70%, #d0ccc0) no-repeat 0 0 / 675px 100%, #f0eeea; }
.bar button, .xl-menu button { height: 22px; flex: none; display: flex; align-items: center; justify-content: center; font-family: "Noto Sans CJK SC", sans-serif; }
.bar button { width: 23px; }
.bar svg, .xl-menu svg { width: 16px; height: 16px; flex: none; }
.grip { width: 2px; height: 14px; margin-right: 3px; flex: none; background: repeating-linear-gradient(#888 0 2px, transparent 2px 4px); }
.sep { width: 1px; height: 15px; margin: 0 2px 0 3px; flex: none; background: #a8a498; }
.caret { width: 11px; flex: none; display: grid; place-items: center; }
.caret::before, .name-btn::before { content: ""; border: 3px solid transparent; border-top-color: #000; border-bottom: 0; }
.name-btn::before { border-width: 4px 4px 0; }
.caret.dim::before { border-top-color: #999; }
.cap { width: 12px; height: 25px; flex: none; margin-left: 1px; display: flex; flex-direction: column; justify-content: flex-end; align-items: center; gap: 2px; padding-bottom: 4px; background: linear-gradient(#9a9a96, #5c5c5c); border-radius: 0 4px 4px 0; }
.cap::before { content: ""; width: 6px; height: 1px; background: #fff; }
.cap::after { content: ""; border: 3px solid transparent; border-top-color: #fff; border-bottom: 0; }
.bar .fmt, .bar .sigma { font-family: "Liberation Serif", serif; font-weight: bold; font-size: 16px; }
.bar .it { font-style: italic; }
.bar .pct { font-family: "Liberation Sans", sans-serif; font-size: 13px; }
.pick { position: relative; height: 17px; display: flex; flex: none; background: #fff; }
.pick select { width: 100%; appearance: none; padding-left: 2px; font: 12px/15px "Liberation Mono", "Noto Sans CJK SC", monospace; }
.pick::after { content: ""; position: absolute; right: 4px; top: 7px; border: 3px solid transparent; border-top-color: #000; border-bottom: 0; pointer-events: none; }
.pick::before { content: ""; position: absolute; right: 1px; top: 1px; bottom: 1px; width: 11px; background: #e4e2da; pointer-events: none; }
.zoom { width: 68px; margin: 0 1px; }
.font { width: 152px; margin-right: 2px; }
.size { width: 46px; }
.size + .sep { margin-left: 4px; }
.xl-menu { height: 24px; display: flex; align-items: center; padding-left: 4px; background: linear-gradient(90deg, #d8d4cc, #f4f2ee); gap: 16px; }
.xl-menu .grip { margin-right: -12px; }
.xl-menu svg { margin-right: -7px; }
.xl-menu button, .bar .word { font-size: 12px; width: auto; }
.s { font: 10px "Liberation Mono", monospace; }
.bar .word { padding-left: 1px; }
.web { height: 24px; margin-bottom: 2px; background: linear-gradient(#f0eee8, #d8d5cc); }
.web .caret + .sep { margin: 0 4px 0 5px; }
.addr { flex: 1; height: 17px; padding-left: 2px; background: #fff; font: 10px "Liberation Mono", "Noto Sans CJK SC", monospace; }
.formula { height: 19px; display: flex; background: #d4d0c8; font: 14px "Liberation Mono", monospace; }
.name { width: 108px; text-align: center; background: #fff; margin-left: 1px; }
.name-btn { width: 17px; display: grid; place-items: center; }
.fx { margin-left: 42px; width: 20px; font: italic bold 13px "Liberation Serif", serif; }
.fx i { font-style: italic; }
.formula .fval { flex: 1; min-width: 0; background: #fff; }
.excel .sheet { flex: 1; min-height: 0; overflow: hidden; margin-left: 1px; background: #fff; border: solid #444; border-width: 2px 0 0 1px; font-size: 16px; }
table { width: calc(100% + 16px); table-layout: fixed; border-collapse: separate; border-spacing: 0; font-family: "Noto Sans CJK SC", sans-serif; }
.c0 { width: 34px; }
.c1 { width: 149px; }
th, td { height: 19px; padding: 0; white-space: nowrap; }
th { background: #d4d0c8; border-right: 1px solid #808080; border-bottom: 1px solid #808080; font: 14px/18px "Liberation Mono", monospace; }
thead th { height: 20px; line-height: 19px; }
td { padding-left: 2px; border-bottom: 1px solid #000; text-align: left; line-height: 16px; }
td:nth-child(2) { border-right: 2px solid #000; }
.sh td:last-child { background: #c0c0c0; }
.n { font: 13px/12px "Liberation Mono", monospace; white-space: pre; }
th.cur { background: #b6bdd2; }
.tick { width: 16px; height: 14px; }
.tabs { height: 17px; display: flex; align-items: stretch; padding-left: 1px; border-bottom: 1px solid #fff; }
.tabs > button { width: 16px; display: grid; place-items: center; }
.tabs svg { width: 8px; height: 8px; }
.tabs .tab { width: 58px; }
.tab svg, .tab span { grid-area: 1 / 1; }
.tabs .tab svg { width: 58px; height: 16px; }
.tab span { font: 13px/16px "Noto Sans CJK SC", sans-serif; }
.fill { flex: 1; border-top: 1px solid #808080; }
.split { width: 4px; border-right: 2px solid #444; border-left: 1px solid #fff; }
.tabs .scroll { border: 1px solid; border-color: #fff #666 #666 #fff; width: 15px; }
.track { width: 87px; border-top: 1px solid #808080; border-left: 1px solid #fff; }
.ready { height: 20px; display: flex; align-items: center; gap: 4px; padding-left: 11px; font: 12px/18px "Noto Sans CJK SC", sans-serif; }
.ready i { width: 34px; height: 14px; border: 1px solid #e4e0d8; }
.ready i:first-of-type { margin-left: auto; }
.ready i:last-child { width: 45px; }
.note { position: absolute; left: 163px; top: 416px; width: 149px; height: 90px; border: 2px solid #f5f088; box-shadow: 2px 3px 4px rgba(0,0,0,.45), inset 2px 3px 4px rgba(0,0,0,.3); }
```
